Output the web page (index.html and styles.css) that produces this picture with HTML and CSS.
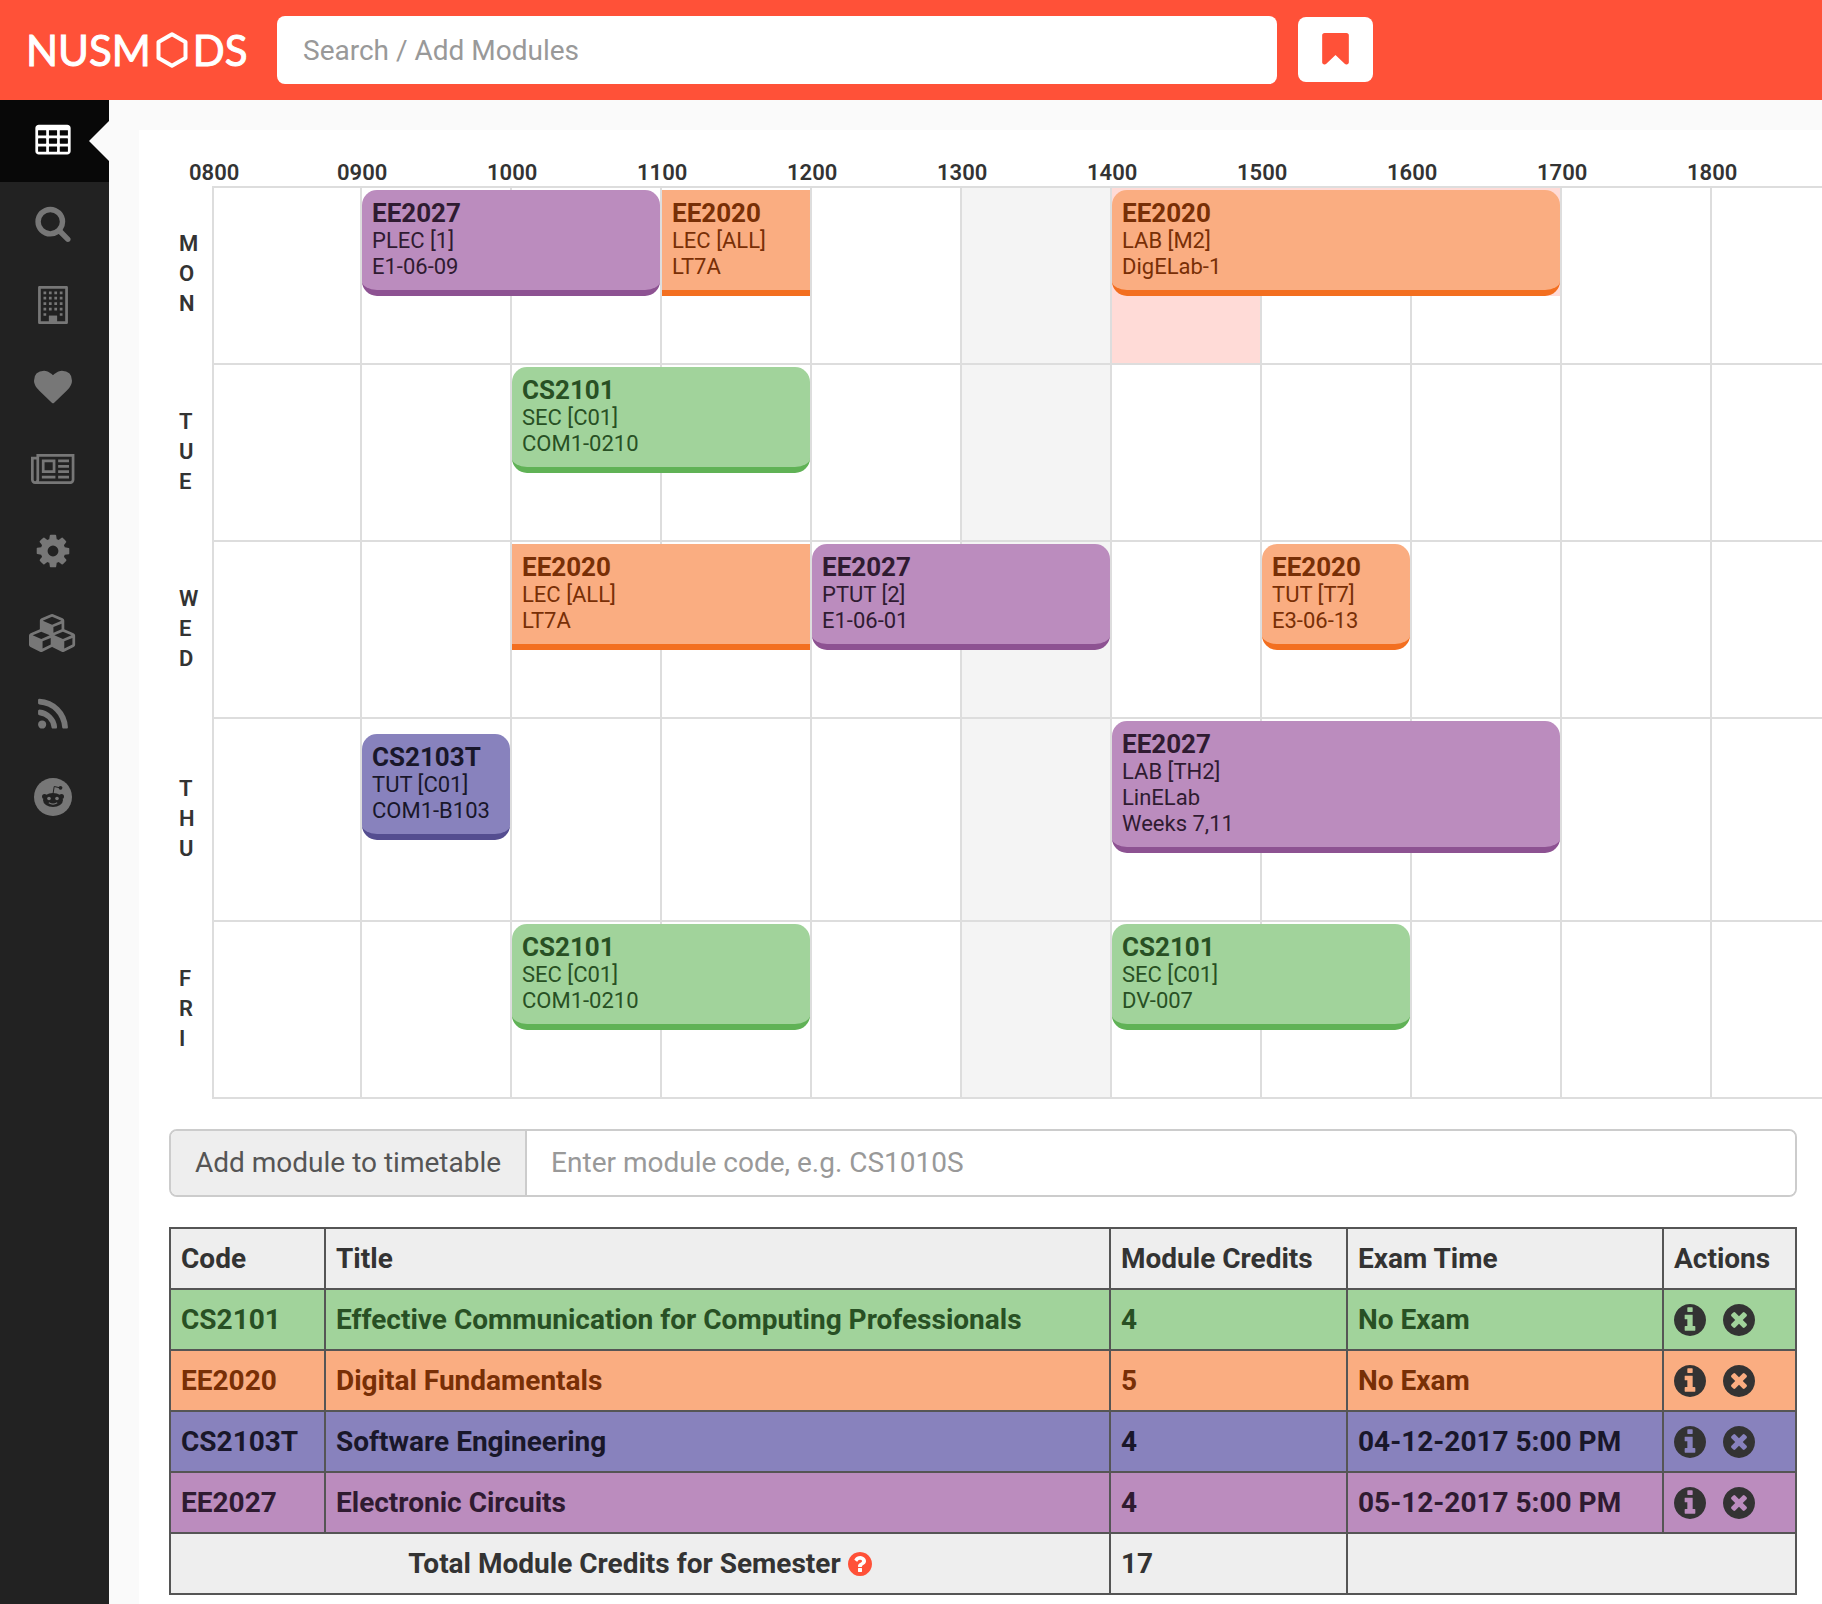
FILE: index.html
```html
<!DOCTYPE html>
<html lang="en">
<head>
<meta charset="utf-8">
<meta name="viewport" content="width=device-width, initial-scale=1">
<title>NUSMods</title>
<link rel="stylesheet" href="styles.css">
</head>
<body>
<svg class="sprite" aria-hidden="true">
  <symbol id="info" viewBox="128 128 1536 1536"><path d="M1152 1376v-160q0-14-9-23t-23-9h-96v-512q0-14-9-23t-23-9h-320q-14 0-23 9t-9 23v160q0 14 9 23t23 9h96v320h-96q-14 0-23 9t-9 23v160q0 14 9 23t23 9h448q14 0 23-9t9-23zm-128-896v-160q0-14-9-23t-23-9h-192q-14 0-23 9t-9 23v160q0 14 9 23t23 9h192q14 0 23-9t9-23zm640 416q0 209-103 385.5t-279.5 279.5-385.5 103-385.5-103-279.5-279.5-103-385.5 103-385.5 279.5-279.5 385.5-103 385.5 103 279.5 279.5 103 385.5z"/></symbol>
  <symbol id="remove" viewBox="128 128 1536 1536"><path d="M1277 1122q0-26-19-45l-181-181 181-181q19-19 19-45 0-27-19-46l-90-90q-19-19-46-19-26 0-45 19l-181 181-181-181q-19-19-45-19-27 0-46 19l-90 90q-19 19-19 46 0 26 19 45l181 181-181 181q-19 19-19 45 0 27 19 46l90 90q19 19 46 19 26 0 45-19l181-181 181 181q19 19 45 19 27 0 46-19l90-90q19-19 19-46zm387-226q0 209-103 385.5t-279.5 279.5-385.5 103-385.5-103-279.5-279.5-103-385.5 103-385.5 279.5-279.5 385.5-103 385.5 103 279.5 279.5 103 385.5z"/></symbol>
</svg>

<header class="topbar">
  <a class="logo" href="#" aria-label="NUSMods"><span>NUSM</span><svg class="logo-hex" viewBox="0 0 32 36"><path d="M16 2.300 29.500 10v16L16 33.700 2.500 26V10z" fill="none" stroke="#fff" stroke-width="4" stroke-linejoin="round"/></svg><span>DS</span></a>
  <input class="search" type="search" placeholder="Search / Add Modules" aria-label="Search / Add Modules">
  <button class="bookmark" type="button" aria-label="Bookmarks"><svg viewBox="256 128 1280 1536"><path d="M1420 128q23 0 44 9 33 13 52.500 41t19.500 62v1289q0 34-19.500 62t-52.500 41q-19 8-44 8-48 0-83-32l-441-424-441 424q-36 33-83 33-23 0-44-9-33-13-52.500-41t-19.500-62v-1289q0-34 19.500-62t52.500-41q21-9 44-9h1048z"/></svg></button>
</header>

<div class="layout">
  <nav class="sidebar" aria-label="Main">
    <a class="nav-item active" href="#" aria-label="Timetable"><svg viewBox="0 0 1792 1792"><path d="M576 1376v-192q0-14-9-23t-23-9h-320q-14 0-23 9t-9 23v192q0 14 9 23t23 9h320q14 0 23-9t9-23zm0-384v-192q0-14-9-23t-23-9h-320q-14 0-23 9t-9 23v192q0 14 9 23t23 9h320q14 0 23-9t9-23zm512 384v-192q0-14-9-23t-23-9h-320q-14 0-23 9t-9 23v192q0 14 9 23t23 9h320q14 0 23-9t9-23zm-512-768v-192q0-14-9-23t-23-9h-320q-14 0-23 9t-9 23v192q0 14 9 23t23 9h320q14 0 23-9t9-23zm512 384v-192q0-14-9-23t-23-9h-320q-14 0-23 9t-9 23v192q0 14 9 23t23 9h320q14 0 23-9t9-23zm512 384v-192q0-14-9-23t-23-9h-320q-14 0-23 9t-9 23v192q0 14 9 23t23 9h320q14 0 23-9t9-23zm-512-768v-192q0-14-9-23t-23-9h-320q-14 0-23 9t-9 23v192q0 14 9 23t23 9h320q14 0 23-9t9-23zm512 384v-192q0-14-9-23t-23-9h-320q-14 0-23 9t-9 23v192q0 14 9 23t23 9h320q14 0 23-9t9-23zm0-384v-192q0-14-9-23t-23-9h-320q-14 0-23 9t-9 23v192q0 14 9 23t23 9h320q14 0 23-9t9-23zm128-320v1088q0 66-47 113t-113 47h-1344q-66 0-113-47t-47-113v-1088q0-66 47-113t113-47h1344q66 0 113 47t47 113z"/></svg></a>
    <a class="nav-item" href="#" aria-label="Search"><svg viewBox="0 0 1792 1792"><path d="M1216 832q0-185-131.500-316.500t-316.500-131.500-316.500 131.500-131.500 316.500 131.500 316.500 316.500 131.500 316.500-131.500 131.500-316.500zm512 832q0 52-38 90t-90 38q-54 0-90-38l-343-342q-179 124-399 124-143 0-273.500-55.500t-225-150-150-225-55.500-273.500 55.500-273.500 150-225 225-150 273.500-55.500 273.500 55.500 225 150 150 225 55.500 273.500q0 220-124 399l343 343q37 37 37 90z"/></svg></a>
    <a class="nav-item" href="#" aria-label="Venues"><svg viewBox="0 0 1792 1792"><path fill-rule="evenodd" d="M256 0H1536q64 0 64 64V1728q0 64-64 64H256q-64 0-64-64V64q0-64 64-64zM320 128V1664H704V1408H1088V1664H1472V128z"/><path d="M704 1408h384v320h-384zM448 256h128v128h-128zM704 256h128v128h-128zM960 256h128v128h-128zM1216 256h128v128h-128zM448 512h128v128h-128zM704 512h128v128h-128zM960 512h128v128h-128zM1216 512h128v128h-128zM448 768h128v128h-128zM704 768h128v128h-128zM960 768h128v128h-128zM1216 768h128v128h-128zM448 1024h128v128h-128zM704 1024h128v128h-128zM960 1024h128v128h-128zM1216 1024h128v128h-128zM448 1280h128v128h-128zM1216 1280h128v128h-128z"/></svg></a>
    <a class="nav-item" href="#" aria-label="Contribute"><svg viewBox="0 0 1792 1792"><path d="M896 1664q-26 0-44-18l-624-602q-10-8-27.500-26t-55.500-65.500-68-97.500-53.500-121-23.500-138q0-220 127-344t351-124q62 0 126.500 21.500t120 58 95.500 68.500 76 68q36-36 76-68t95.500-68.500 120-58 126.500-21.500q224 0 351 124t127 344q0 221-229 450l-623 600q-18 18-44 18z"/></svg></a>
    <a class="nav-item" href="#" aria-label="News"><svg viewBox="0 64 2048 1792"><path d="M1024 640h-384v384h384v-384zm128 640v128h-640v-128h640zm0-768v640h-640v-640h640zm640 768v128h-512v-128h512zm0-256v128h-512v-128h512zm0-256v128h-512v-128h512zm0-256v128h-512v-128h512zm-1536 960v-960h-128v960q0 26 19 45t45 19 45-19 19-45zm1664 0v-1088h-1536v1088q0 33-11 64h1483q26 0 45-19t19-45zm128-1216v1216q0 80-56 136t-136 56h-1664q-80 0-136-56t-56-136v-1088h256v-128h1792z"/></svg></a>
    <a class="nav-item" href="#" aria-label="Settings"><svg viewBox="0 0 1792 1792"><path d="M1152 896q0-106-75-181t-181-75-181 75-75 181 75 181 181 75 181-75 75-181zm512-109v222q0 12-8 23t-20 13l-185 28q-19 54-39 91 35 50 107 138 10 12 10 25t-9 23q-27 37-99 108t-94 71q-12 0-26-9l-138-108q-44 23-91 38-16 136-29 186-7 28-36 28h-222q-14 0-24.500-8.500t-11.500-21.500l-28-184q-49-16-90-37l-141 107q-10 9-25 9-14 0-25-11-126-114-165-168-7-10-7-23 0-12 8-23 15-21 51-66.500t54-70.500q-27-50-41-99l-183-27q-13-2-21-12.500t-8-23.500v-222q0-12 8-23t19-13l186-28q14-46 39-92-40-57-107-138-10-12-10-24 0-10 9-23 26-36 98.500-107.500t94.500-71.500q13 0 26 10l138 107q44-23 91-38 16-136 29-186 7-28 36-28h222q14 0 24.500 8.500t11.500 21.500l28 184q49 16 90 37l142-107q9-9 24-9 13 0 25 10 129 119 165 170 7 8 7 22 0 12-8 23-15 21-51 66.500t-54 70.500q26 50 41 98l183 28q13 2 21 12.500t8 23.500z"/></svg></a>
    <a class="nav-item" href="#" aria-label="Apps"><svg viewBox="0 0 2304 1792"><path d="M640 1632l384-192v-314l-384 164v342zm-64-454l404-173-404-173-404 173zm1088 454l384-192v-314l-384 164v342zm-64-454l404-173-404-173-404 173zm-448-293l384-165v-266l-384 164v267zm-64-379l441-189-441-189-441 189zm1088 518v416q0 36-19 67t-52 47l-448 224q-25 14-57 14t-57-14l-448-224q-4-2-7-4-2 2-7 4l-448 224q-25 14-57 14t-57-14l-448-224q-33-16-52-47t-19-67v-416q0-38 21.500-70t56.500-48l434-186v-400q0-38 21.500-70t56.500-48l448-192q23-10 50-10t50 10l448 192q35 16 56.500 48t21.500 70v400l434 186q36 16 57 48t21 70z"/></svg></a>
    <a class="nav-item" href="#" aria-label="Blog"><svg viewBox="0 0 1792 1792"><path d="M576 1344q0 80-56 136t-136 56-136-56-56-136 56-136 136-56 136 56 56 136zm512 123q2 28-17 48-18 21-47 21h-135q-25 0-43-16.500t-20-41.500q-22-229-184.500-391.500t-391.500-184.500q-25-2-41.500-20t-16.500-43v-135q0-29 21-47 17-17 43-17h5q160 13 306 80.500t259 181.500q114 113 181.500 259t80.500 306zm512 2q2 27-18 47-18 20-46 20h-143q-26 0-44.500-17.500t-19.500-42.500q-12-215-101-408.500t-231.500-336-336-231.500-408.500-102q-25-1-42.500-19.500t-17.500-43.500v-143q0-28 20-46 18-18 44-18h3q262 13 501.500 120t425.500 294q187 186 294 425.500t120 501.500z"/></svg></a>
    <a class="nav-item" href="#" aria-label="Reddit"><svg viewBox="0 0 38 38"><circle cx="19" cy="19" r="19"/><g fill="#222"><ellipse cx="19" cy="22" rx="10" ry="7"/><circle cx="10.500" cy="18.500" r="2.500"/><circle cx="27.500" cy="18.500" r="2.500"/><circle cx="26.500" cy="9.800" r="1.900"/></g><path d="M19 16 20.200 8.500 25.500 9.700" fill="none" stroke="#222" stroke-width="1"/><circle cx="15" cy="20.500" r="1.800"/><circle cx="23" cy="20.500" r="1.800"/><path d="M14.800 24.800Q19 27.500 23.200 24.800" fill="none" stroke="#777" stroke-width="1.200"/></svg></a>
  </nav>

  <main class="panel">
    <section class="timetable" aria-label="Timetable">
      <div class="hours"><span>0800</span><span>0900</span><span>1000</span><span>1100</span><span>1200</span><span>1300</span><span>1400</span><span>1500</span><span>1600</span><span>1700</span><span>1800</span></div>
      <div class="day">
        <h2>M<br>O<br>N</h2>
        <div class="slots">
          <i></i><i></i><i></i><i></i><i></i><i class="lunch"></i><i></i><i></i><i></i><i></i><i></i>
          <b class="hit c7 s3"></b><b class="hit-tail c7 s1"></b>
          <article class="lesson purple c2 s2"><h3>EE2027</h3><p>PLEC [1]</p><p>E1-06-09</p></article>
          <article class="lesson orange fixed c4 s1"><h3>EE2020</h3><p>LEC [ALL]</p><p>LT7A</p></article>
          <article class="lesson orange c7 s3"><h3>EE2020</h3><p>LAB [M2]</p><p>DigELab-1</p></article>
        </div>
      </div>
      <div class="day">
        <h2>T<br>U<br>E</h2>
        <div class="slots">
          <i></i><i></i><i></i><i></i><i></i><i class="lunch"></i><i></i><i></i><i></i><i></i><i></i>
          <article class="lesson green c3 s2"><h3>CS2101</h3><p>SEC [C01]</p><p>COM1-0210</p></article>
        </div>
      </div>
      <div class="day">
        <h2>W<br>E<br>D</h2>
        <div class="slots">
          <i></i><i></i><i></i><i></i><i></i><i class="lunch"></i><i></i><i></i><i></i><i></i><i></i>
          <article class="lesson orange fixed c3 s2"><h3>EE2020</h3><p>LEC [ALL]</p><p>LT7A</p></article>
          <article class="lesson purple c5 s2"><h3>EE2027</h3><p>PTUT [2]</p><p>E1-06-01</p></article>
          <article class="lesson orange c8 s1"><h3>EE2020</h3><p>TUT [T7]</p><p>E3-06-13</p></article>
        </div>
      </div>
      <div class="day">
        <h2>T<br>H<br>U</h2>
        <div class="slots">
          <i></i><i></i><i></i><i></i><i></i><i class="lunch"></i><i></i><i></i><i></i><i></i><i></i>
          <article class="lesson blue c2 s1"><h3>CS2103T</h3><p>TUT [C01]</p><p>COM1-B103</p></article>
          <article class="lesson purple c7 s3"><h3>EE2027</h3><p>LAB [TH2]</p><p>LinELab</p><p>Weeks 7,11</p></article>
        </div>
      </div>
      <div class="day">
        <h2>F<br>R<br>I</h2>
        <div class="slots">
          <i></i><i></i><i></i><i></i><i></i><i class="lunch"></i><i></i><i></i><i></i><i></i><i></i>
          <article class="lesson green c3 s2"><h3>CS2101</h3><p>SEC [C01]</p><p>COM1-0210</p></article>
          <article class="lesson green c7 s2"><h3>CS2101</h3><p>SEC [C01]</p><p>DV-007</p></article>
        </div>
      </div>
    </section>

    <div class="add-module">
      <label for="module">Add module to timetable</label>
      <input id="module" type="text" placeholder="Enter module code, e.g. CS1010S">
    </div>

    <table class="modules">
      <colgroup><col class="col-code"><col><col class="col-credits"><col class="col-exam"><col class="col-actions"></colgroup>
      <thead>
        <tr><th>Code</th><th>Title</th><th>Module Credits</th><th>Exam Time</th><th>Actions</th></tr>
      </thead>
      <tbody>
        <tr class="green"><td>CS2101</td><td>Effective Communication for Computing Professionals</td><td>4</td><td>No Exam</td><td><div class="actions"><button type="button" aria-label="Info"><svg><use href="#info"/></svg></button><button type="button" aria-label="Remove"><svg><use href="#remove"/></svg></button></div></td></tr>
        <tr class="orange"><td>EE2020</td><td>Digital Fundamentals</td><td>5</td><td>No Exam</td><td><div class="actions"><button type="button" aria-label="Info"><svg><use href="#info"/></svg></button><button type="button" aria-label="Remove"><svg><use href="#remove"/></svg></button></div></td></tr>
        <tr class="blue"><td>CS2103T</td><td>Software Engineering</td><td>4</td><td>04-12-2017 5:00 PM</td><td><div class="actions"><button type="button" aria-label="Info"><svg><use href="#info"/></svg></button><button type="button" aria-label="Remove"><svg><use href="#remove"/></svg></button></div></td></tr>
        <tr class="purple"><td>EE2027</td><td>Electronic Circuits</td><td>4</td><td>05-12-2017 5:00 PM</td><td><div class="actions"><button type="button" aria-label="Info"><svg><use href="#info"/></svg></button><button type="button" aria-label="Remove"><svg><use href="#remove"/></svg></button></div></td></tr>
      </tbody>
      <tfoot>
        <tr><td colspan="2"><div class="total">Total Module Credits for Semester <svg viewBox="128 128 1536 1536"><circle cx="896" cy="896" r="700" fill="#fff"/><path d="M1024 1376v-192q0-14-9-23t-23-9h-192q-14 0-23 9t-9 23v192q0 14 9 23t23 9h192q14 0 23-9t9-23zm256-672q0-88-55.500-163t-138.500-116-170-41q-243 0-371 213-15 24 8 42l132 100q7 6 19 6 16 0 25-12 53-68 86-92 34-24 86-24 48 0 85.500 26t37.500 59q0 38-20 61t-68 45q-63 28-115.500 86.500t-52.500 125.500v36q0 14 9 23t23 9h192q14 0 23-9t9-23q0-19 21.500-49.500t54.500-49.500q32-18 49-28.500t46-35 44.500-48 28-60.500 12.500-81zm384 192q0 209-103 385.500t-279.500 279.500-385.500 103-385.500-103-279.500-279.500-103-385.500 103-385.500 279.500-279.500 385.500-103 385.500 103 279.500 279.500 103 385.500z"/></svg></div></td><td>17</td><td colspan="2"></td></tr>
      </tfoot>
    </table>
  </main>
</div>
</body>
</html>
```
FILE: styles.css
```css
* { box-sizing: border-box; }

body {
  margin: 0;
  min-height: 100vh;
  display: flex;
  flex-direction: column;
  overflow-x: hidden;
  background: #fafafa;
  color: #333;
  font: 400 28px/40px Roboto, "Liberation Sans", sans-serif;
}

h2, h3, p { margin: 0; }
input, button { font: inherit; color: inherit; }
input::placeholder { color: #999; opacity: 1; }
.sprite { display: none; }

/* Top bar */
.topbar {
  display: flex;
  align-items: center;
  height: 100px;
  padding-left: 26px;
  background: #ff5138;
}

.logo {
  flex: none;
  width: 251px;
  display: flex;
  align-items: center;
  gap: 5px;
  color: #fff;
  font: 400 42px/50px Lato, sans-serif;
  -webkit-text-stroke: 1px #fff;
  text-decoration: none;
}
.logo-hex { width: 32px; height: 36px; }

.search {
  flex: 0 1 1000px;
  min-width: 0;
  height: 68px;
  padding: 0 26px;
  border: 0;
  border-radius: 8px;
  background: #fff;
}

.bookmark {
  flex: none;
  display: grid;
  place-items: center;
  width: 75px;
  height: 65px;
  margin: 0 0 2px 21px;
  padding: 0;
  border: 0;
  border-radius: 8px;
  background: #fff;
}
.bookmark svg { width: 27px; height: 32px; fill: #ff5138; }

/* Sidebar */
.layout { flex: 1; display: flex; }

.sidebar { flex: none; width: 109px; background: #222; }

.nav-item {
  position: relative;
  display: flex;
  align-items: center;
  justify-content: center;
  height: 82px;
  padding-right: 3px;
}
.nav-item svg { height: 38px; fill: #777; }
.nav-item.active { background: #080808; }
.nav-item.active svg { fill: #fff; }
.nav-item.active::after {
  content: "";
  position: absolute;
  right: 0;
  top: 21px;
  border: solid transparent;
  border-width: 20px 20px 20px 0;
  border-right-color: #fafafa;
}

/* Panel */
.panel {
  flex: 1;
  min-width: 0;
  margin: 30px 0 0 30px;
  padding: 30px 25px 9px 30px;
  background: #fff;
}

/* Timetable */
.timetable { margin: 0 -25px 30px 0; overflow: hidden; }

.hours {
  display: flex;
  padding-left: 20px;
  font-size: 22px;
  font-weight: 600;
  line-height: 26px;
}
.hours span { flex: none; width: 150px; }
.hours span:first-child { width: 148px; }

.day { display: flex; width: max-content; }
.day h2 {
  width: 43px;
  padding: 0 0 4px 10px;
  align-self: center;
  font-size: 22px;
  font-weight: 600;
  line-height: 30px;
}

.slots {
  display: grid;
  grid-template-columns: repeat(11, 150px);
  grid-template-rows: auto 67px;
  align-items: center;
  border-bottom: 2px solid #ddd;
}
.day:nth-child(2) .slots { border-top: 2px solid #ddd; }

.slots i {
  grid-row: 1 / 3;
  align-self: stretch;
  border-right: 2px solid #ddd;
}
.slots i:first-child { border-left: 2px solid #ddd; }
.slots .lunch { background: #f4f4f4; }

.slots i:nth-of-type(1) { grid-column: 1; }
.slots i:nth-of-type(2) { grid-column: 2; }
.slots i:nth-of-type(3) { grid-column: 3; }
.slots i:nth-of-type(4) { grid-column: 4; }
.slots i:nth-of-type(5) { grid-column: 5; }
.slots i:nth-of-type(6) { grid-column: 6; }
.slots i:nth-of-type(7) { grid-column: 7; }
.slots i:nth-of-type(8) { grid-column: 8; }
.slots i:nth-of-type(9) { grid-column: 9; }
.slots i:nth-of-type(10) { grid-column: 10; }
.slots i:nth-of-type(11) { grid-column: 11; }

.c2 { grid-column-start: 2; }
.c3 { grid-column-start: 3; }
.c4 { grid-column-start: 4; }
.c5 { grid-column-start: 5; }
.c7 { grid-column-start: 7; }
.c8 { grid-column-start: 8; }
.s1 { grid-column-end: span 1; }
.s2 { grid-column-end: span 2; }
.s3 { grid-column-end: span 3; }

.hit, .hit-tail { align-self: stretch; margin-right: 2px; background: #ffdbd7; }
.hit { grid-row: 1; }
.hit-tail { grid-row: 2; }

.lesson {
  grid-row: 1;
  margin: 2px 2px 0 0;
  padding: 10px;
  border-bottom: 6px solid;
  border-radius: 15px;
  font-size: 22px;
  font-weight: 400;
  line-height: 26px;
}
.lesson.fixed { border-radius: 0; }
.lesson h3 { margin-bottom: 2px; font-size: 26px; font-weight: 700; line-height: 26px; }

.green { background: #a1d39b; color: #285024; }
.orange { background: #faad81; color: #782f06; }
.blue { background: #8882bd; color: #19172a; }
.purple { background: #bb8cbe; color: #2f1b31; }
.lesson.green { border-color: #60b256; }
.lesson.orange { border-color: #f36f20; }
.lesson.blue { border-color: #544d90; }
.lesson.purple { border-color: #8d5292; }

/* Add module */
.add-module {
  display: flex;
  height: 68px;
  margin-bottom: 30px;
  border: 2px solid #ccc;
  border-radius: 8px;
  overflow: hidden;
}
.add-module label {
  padding: 12px 24px;
  border-right: 2px solid #ccc;
  background: #eee;
  color: #555;
  white-space: nowrap;
}
.add-module input {
  flex: 1;
  min-width: 0;
  padding: 0 24px;
  border: 0;
  background: #fff;
}

/* Modules table */
.modules {
  width: 100%;
  table-layout: fixed;
  border-collapse: collapse;
}
.col-code { width: 155px; }
.col-credits { width: 237px; }
.col-exam { width: 316px; }
.col-actions { width: 133px; }

.modules th, .modules td {
  height: 61px;
  padding: 0 10px;
  border: 2px solid #555;
  font-weight: 700;
  text-align: left;
  white-space: nowrap;
}
.modules thead, .modules tfoot { background: #eee; }

.actions { display: flex; gap: 17px; }
.actions button { display: block; padding: 0; border: 0; background: none; }
.actions svg { display: block; width: 32px; height: 32px; fill: #333; }

.total { display: flex; align-items: center; justify-content: center; gap: 7px; }
.total svg { width: 24px; height: 24px; fill: #ff5138; }
```
